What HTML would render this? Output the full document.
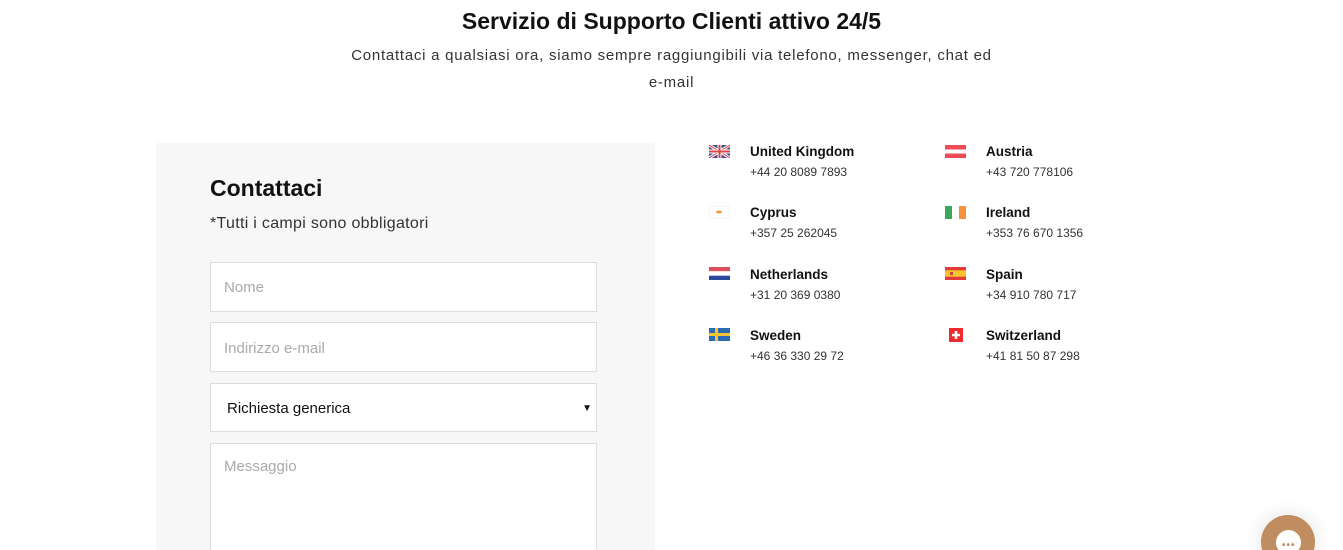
<!DOCTYPE html>
<html><head><meta charset="utf-8"><style>
*{margin:0;padding:0;box-sizing:border-box}
html,body{width:1343px;height:550px;overflow:hidden}
body{background:#fff;font-family:"Liberation Sans",sans-serif;color:#111;position:relative}
.t{position:absolute;left:0;width:1343px;text-align:center;top:7px;font-size:23px;font-weight:bold;line-height:28px}
.s{position:absolute;left:0;width:1343px;text-align:center;top:42px;font-size:15px;letter-spacing:0.75px;line-height:27px;color:#333}
.panel{position:absolute;left:156px;top:143px;width:499px;height:407px;background:#f7f7f7}
.h{position:absolute;left:210px;top:175px;font-size:23px;font-weight:bold}
.n{position:absolute;left:210px;top:215px;font-size:16px;letter-spacing:0.3px;color:#333}
.in{position:absolute;left:210px;width:387px;background:#fff;border:1px solid #ddd;font-size:15px;color:#aaa;padding-left:13px}
.c{position:absolute;font-size:13.5px;font-weight:bold}
.p{position:absolute;font-size:12px;color:#333}
.f{position:absolute;width:21px;height:13px}
</style></head><body>
<div class="t">Servizio di Supporto Clienti attivo 24/5</div>
<div class="s">Contattaci a qualsiasi ora, siamo sempre raggiungibili via telefono, messenger, chat ed<br>e-mail</div>
<div class="panel"></div>
<div class="h">Contattaci</div>
<div class="n">*Tutti i campi sono obbligatori</div>
<div class="in" style="top:262px;height:50px;line-height:50px">Nome</div>
<div class="in" style="top:322px;height:50px;line-height:52px">Indirizzo e-mail</div>
<div class="in" style="top:383px;height:49px;line-height:50px;color:#111;padding-left:16px">Richiesta generica<span style="position:absolute;right:4px;font-size:10px">▼</span></div>
<div class="in" style="top:443px;height:120px;padding-top:14px">Messaggio</div>

<svg class="f" style="left:709px;top:145px" viewBox="0 0 21 13"><rect width="21" height="13" fill="#3a4f9c"/><path d="M0 0L21 13M21 0L0 13" stroke="#fff" stroke-width="3"/><path d="M0 0L21 13M21 0L0 13" stroke="#d44" stroke-width="1"/><path d="M10.5 0V13M0 6.5H21" stroke="#fff" stroke-width="4"/><path d="M10.5 0V13M0 6.5H21" stroke="#d44" stroke-width="2"/></svg>
<div class="c" style="left:750px;top:144px">United Kingdom</div><div class="p" style="left:750px;top:165px">+44 20 8089 7893</div>
<svg class="f" style="left:945px;top:145px" viewBox="0 0 21 13"><rect width="21" height="13" fill="#ef4b55"/><rect y="4.5" width="21" height="4" fill="#fff"/></svg>
<div class="c" style="left:986px;top:144px">Austria</div><div class="p" style="left:986px;top:165px">+43 720 778106</div>

<svg class="f" style="left:709px;top:206px" viewBox="0 0 21 13"><rect width="21" height="13" fill="#fff" stroke="#eee"/><ellipse cx="10" cy="6" rx="3" ry="1.5" fill="#f09a3e"/></svg>
<div class="c" style="left:750px;top:205px">Cyprus</div><div class="p" style="left:750px;top:226px">+357 25 262045</div>
<svg class="f" style="left:945px;top:206px" viewBox="0 0 21 13"><rect width="7" height="13" fill="#3aa856"/><rect x="7" width="7" height="13" fill="#fff"/><rect x="14" width="7" height="13" fill="#f7913b"/></svg>
<div class="c" style="left:986px;top:205px">Ireland</div><div class="p" style="left:986px;top:226px">+353 76 670 1356</div>

<svg class="f" style="left:709px;top:267px" viewBox="0 0 21 13"><rect width="21" height="4.3" fill="#d9525c"/><rect y="4.3" width="21" height="4.4" fill="#fff"/><rect y="8.7" width="21" height="4.3" fill="#2a4a9c"/></svg>
<div class="c" style="left:750px;top:267px">Netherlands</div><div class="p" style="left:750px;top:288px">+31 20 369 0380</div>
<svg class="f" style="left:945px;top:267px" viewBox="0 0 21 13"><rect width="21" height="13" fill="#e33b3b"/><rect y="3.3" width="21" height="6.4" fill="#f8c42d"/><rect x="5" y="5" width="3" height="3" fill="#c44"/></svg>
<div class="c" style="left:986px;top:267px">Spain</div><div class="p" style="left:986px;top:288px">+34 910 780 717</div>

<svg class="f" style="left:709px;top:328px" viewBox="0 0 21 13"><rect width="21" height="13" fill="#2b6bb3"/><path d="M0 6.5H21M7.5 0V13" stroke="#f8c42d" stroke-width="3"/></svg>
<div class="c" style="left:750px;top:328px">Sweden</div><div class="p" style="left:750px;top:349px">+46 36 330 29 72</div>
<svg style="position:absolute;left:949px;top:328px;width:14px;height:14px" viewBox="0 0 14 14"><rect width="14" height="14" fill="#ef2b2d"/><path d="M7 3V11M3 7H11" stroke="#fff" stroke-width="2.6"/></svg>
<div class="c" style="left:986px;top:328px">Switzerland</div><div class="p" style="left:986px;top:349px">+41 81 50 87 298</div>

<div style="position:absolute;left:1261px;top:515px;width:54px;height:54px;border-radius:50%;background:#bf8d5f;box-shadow:0 0 20px rgba(0,0,0,.12)"></div>
<div style="position:absolute;left:1276px;top:530px;width:25px;height:25px;border-radius:50%;background:#fff"></div>
<div style="position:absolute;left:1282px;top:540px;font-size:10px;color:#bf8d5f;font-weight:bold;letter-spacing:1px">•••</div>
</body></html>
